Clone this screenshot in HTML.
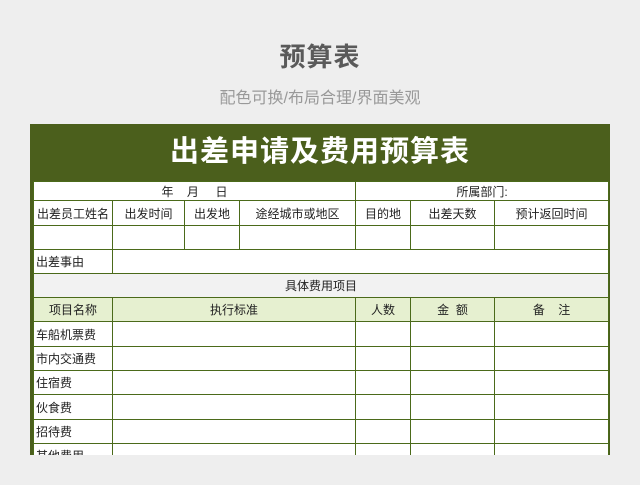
<!DOCTYPE html>
<html><head><meta charset="utf-8"><style>
body{margin:0;width:640px;height:485px;background:#eeeeee;position:relative;overflow:hidden;font-family:"Liberation Sans","Noto Sans CJK SC",sans-serif}
.h1{position:absolute;top:37px;left:0;width:640px;text-align:center;font-size:26px;color:#5a5a5a;font-weight:bold;letter-spacing:1px}
.h2{position:absolute;top:84px;left:0;width:640px;text-align:center;font-size:16px;color:#999}
.sheet{position:absolute;left:30px;top:124px;width:580px;height:331px;background:#4b5f1c;overflow:hidden}
.title{position:absolute;left:0;top:0;width:580px;height:57px;line-height:57px;text-align:center;color:#fff;font-size:29px;font-weight:bold;letter-spacing:1px}
table{position:absolute;left:3px;top:57px;border-collapse:collapse;background:#fff;table-layout:fixed;width:575px}
td{border:1px solid #4b6a1a;font-size:12px;color:#222;text-align:center;padding:0;white-space:nowrap;overflow:hidden}
td.l{text-align:left;padding-left:2px}
.g{background:#f2f2f2}.lg{background:#e6f0d0}
</style></head><body>
<div class="h1">预算表</div>
<div class="h2">配色可换/布局合理/界面美观</div>
<div class="sheet">
<div class="title">出差申请及费用预算表</div>
<table>
<colgroup><col style="width:79px"><col style="width:72px"><col style="width:55px"><col style="width:116px"><col style="width:55px"><col style="width:84px"><col style="width:114px"></colgroup>
<tr style="height:19px"><td colspan="4">年&nbsp;&nbsp;&nbsp;&nbsp;月&nbsp;&nbsp;&nbsp;&nbsp;&nbsp;日</td><td colspan="3">所属部门:</td></tr>
<tr style="height:25px"><td>出差员工姓名</td><td>出发时间</td><td>出发地</td><td>途经城市或地区</td><td>目的地</td><td>出差天数</td><td>预计返回时间</td></tr>
<tr style="height:24px"><td></td><td></td><td></td><td></td><td></td><td></td><td></td></tr>
<tr style="height:24px"><td class="l">出差事由</td><td colspan="6"></td></tr>
<tr style="height:24px" class="g"><td colspan="7">具体费用项目</td></tr>
<tr style="height:24px" class="lg"><td>项目名称</td><td colspan="3">执行标准</td><td>人数</td><td>金&nbsp;&nbsp;额</td><td>备&nbsp;&nbsp;&nbsp;&nbsp;注</td></tr>
<tr style="height:25px"><td class="l">车船机票费</td><td colspan="3"></td><td></td><td></td><td></td></tr>
<tr style="height:24px"><td class="l">市内交通费</td><td colspan="3"></td><td></td><td></td><td></td></tr>
<tr style="height:24px"><td class="l">住宿费</td><td colspan="3"></td><td></td><td></td><td></td></tr>
<tr style="height:25px"><td class="l">伙食费</td><td colspan="3"></td><td></td><td></td><td></td></tr>
<tr style="height:24px"><td class="l">招待费</td><td colspan="3"></td><td></td><td></td><td></td></tr>
<tr style="height:24px"><td class="l">其他费用</td><td colspan="3"></td><td></td><td></td><td></td></tr>
</table>
</div>
</body></html>
